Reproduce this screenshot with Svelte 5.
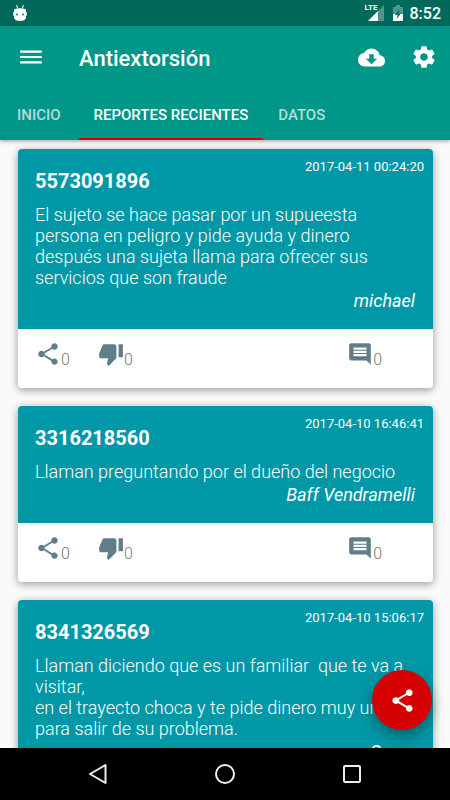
<script>
  const tabs = ['INICIO', 'REPORTES RECIENTES', 'DATOS'];
  let active = $state(1);

  const reports = [
    {
      phone: '5573091896',
      date: '2017-04-11 00:24:20',
      text: 'El sujeto se hace pasar por un supueesta\npersona en peligro y pide ayuda y dinero\ndespués una sujeta llama para ofrecer sus\nservicios que son fraude',
      author: 'michael'
    },
    {
      phone: '3316218560',
      date: '2017-04-10 16:46:41',
      text: 'Llaman preguntando por el dueño del negocio',
      author: 'Baff Vendramelli'
    },
    {
      phone: '8341326569',
      date: '2017-04-10 15:06:17',
      text: 'Llaman diciendo que es un familiar  que te va a\nvisitar,\nen el trayecto choca y te pide dinero muy urgente\npara salir de su problema.',
      author: 'Oscar'
    }
  ];

  const share =
    'M18 16.08c-.76 0-1.44.3-1.96.77L8.91 12.7c.05-.23.09-.46.09-.7s-.04-.47-.09-.7l7.05-4.11c.54.5 1.25.81 2.04.81 1.66 0 3-1.34 3-3s-1.34-3-3-3-3 1.34-3 3c0 .24.04.47.09.7L8.04 9.81C7.5 9.31 6.79 9 6 9c-1.66 0-3 1.34-3 3s1.34 3 3 3c.79 0 1.5-.31 2.04-.81l7.12 4.16c-.05.21-.08.43-.08.65 0 1.61 1.31 2.92 2.92 2.92s2.92-1.31 2.92-2.92-1.31-2.92-2.92-2.92z';
  const thumbDown =
    'M15 3H6c-.83 0-1.54.5-1.84 1.22l-3.02 7.05c-.09.23-.14.47-.14.73v1.91l.01.01L1 14c0 1.1.9 2 2 2h6.31l-.95 4.57-.03.32c0 .41.17.79.44 1.06L9.83 23l6.59-6.59c.36-.36.58-.86.58-1.41V5c0-1.1-.9-2-2-2zm4 0v12h4V3h-4z';
  const comment =
    'M21.99 4c0-1.1-.89-2-1.99-2H4c-1.1 0-2 .9-2 2v12c0 1.1.9 2 2 2h14l4 4-.01-18zM18 14H6v-2h12v2zm0-3H6V9h12v2zm0-3H6V6h12v2z';
  const cloud =
    'M19.35 10.04C18.67 6.59 15.64 4 12 4 9.11 4 6.6 5.64 5.35 8.04 2.34 8.36 0 10.91 0 14c0 3.31 2.69 6 6 6h13c2.76 0 5-2.24 5-5 0-2.64-2.05-4.78-4.65-4.96zM17 13l-5 5-5-5h3V9h4v4h3z';
  const gear =
    'M19.43 12.98c.04-.32.07-.64.07-.98s-.03-.66-.07-.98l2.11-1.65c.19-.15.24-.42.12-.64l-2-3.46c-.12-.22-.39-.3-.61-.22l-2.49 1c-.52-.4-1.08-.73-1.69-.98l-.38-2.65C14.46 2.18 14.25 2 14 2h-4c-.25 0-.46.18-.49.42l-.38 2.65c-.61.25-1.17.59-1.69.98l-2.49-1c-.23-.09-.49 0-.61.22l-2 3.46c-.13.22-.07.49.12.64l2.11 1.65c-.04.32-.07.65-.07.98s.03.66.07.98l-2.11 1.65c-.19.15-.24.42-.12.64l2 3.46c.12.22.39.3.61.22l2.49-1c.52.4 1.08.73 1.69.98l.38 2.65c.03.24.24.42.49.42h4c.25 0 .46-.18.49-.42l.38-2.65c.61-.25 1.17-.59 1.69-.98l2.49 1c.23.09.49 0 .61-.22l2-3.46c.12-.22.07-.49-.12-.64l-2.11-1.65zM12 15.5c-1.93 0-3.5-1.57-3.5-3.5s1.57-3.5 3.5-3.5 3.5 1.57 3.5 3.5-1.57 3.5-3.5 3.5z';
</script>

{#snippet icon(d, size)}
  <svg width={size} height={size} viewBox="0 0 24 24" fill="currentColor" aria-hidden="true"><path {d} /></svg>
{/snippet}

<div class="screen">
  <div class="status">
    <svg class="droid" width="14" height="18" viewBox="0 0 14 18" aria-hidden="true">
      <path d="M3.6 1l1 3.4M10.4 1l-1 3.4" stroke="#fff" stroke-width="1" />
      <path d="M1 5.2Q7 3.2 13 5.2V13Q13 17 7 17T1 13Z" fill="#fff" />
      <path d="M0.5 8v4M13.5 8v4" stroke="#fff" stroke-opacity=".7" />
      <circle cx="4" cy="10.5" r=".9" fill="#00695c" /><circle cx="10" cy="10.5" r=".9" fill="#00695c" />
    </svg>
    <span class="signal">
      <span class="lte">LTE</span>
      <svg width="16" height="16" viewBox="0 0 16 16" aria-hidden="true">
        <path d="M16 0V16H0Z" fill="#fff" fill-opacity=".3" /><path d="M10 6V16H0Z" fill="#fff" />
      </svg>
    </span>
    <svg class="battery" width="10" height="16" viewBox="0 0 10 16" aria-hidden="true">
      <path d="M3 0h4v2h3v14H0V2h3z" fill="#fff" fill-opacity=".3" />
      <path d="M0 9h10v7H0z" fill="#fff" />
      <path d="M6.5 4L2 10h2.6L3.6 14 8 8.5H5.6z" fill="#00695c" />
    </svg>
    <span class="clock">8:52</span>
  </div>

  <header>
    <div class="toolbar">
      <button class="menu" aria-label="Menú">
        <svg width="26" height="26" viewBox="0 0 24 24" fill="currentColor" aria-hidden="true"><path d="M2 18h20v-2H2v2zm0-5h20v-2H2v2zm0-7v2h20V6H2z" /></svg>
      </button>
      <h1>Antiextorsión</h1>
      <button aria-label="Descargar">{@render icon(cloud, 27)}</button>
      <button aria-label="Ajustes">{@render icon(gear, 26)}</button>
    </div>
    <nav class="tabs">
      {#each tabs as tab, i}
        <button class:active={active === i} onclick={() => (active = i)}>{tab}</button>
      {/each}
    </nav>
  </header>

  <main>
    {#each reports as r}
      <article>
        <div class="body">
          <time>{r.date}</time>
          <h2>{r.phone}</h2>
          <p>{r.text}</p>
          <address>{r.author}</address>
        </div>
        <div class="actions">
          <button aria-label="Compartir">{@render icon(share, 26)}<span>0</span></button>
          <button aria-label="No me gusta">{@render icon(thumbDown, 26)}<span>0</span></button>
          <button class="comments" aria-label="Comentarios">{@render icon(comment, 26)}<span>0</span></button>
        </div>
      </article>
    {/each}
    <button class="fab" aria-label="Compartir aplicación">{@render icon(share, 27)}</button>
  </main>

  <div class="navbar">
    <button aria-label="Atrás">
      <svg width="22" height="22" viewBox="0 0 22 22" aria-hidden="true"><path d="M18.5 2V20L3 11Z" /></svg>
    </button>
    <button aria-label="Inicio">
      <svg width="22" height="22" viewBox="0 0 22 22" aria-hidden="true"><circle cx="11" cy="11" r="9" /></svg>
    </button>
    <button aria-label="Recientes">
      <svg width="22" height="22" viewBox="0 0 22 22" aria-hidden="true"><rect x="3" y="3" width="16" height="16" rx="1" /></svg>
    </button>
  </div>
</div>

<style>
  :global(body) {
    margin: 0;
  }
  .screen {
    height: 100vh;
    display: flex;
    flex-direction: column;
    overflow: hidden;
    background: #fafafa;
    font-family: Roboto, 'Noto Sans', sans-serif;
    color: #fff;
  }
  button {
    padding: 0;
    border: 0;
    background: none;
    color: inherit;
    font: inherit;
    cursor: pointer;
  }
  svg {
    display: block;
    flex: none;
  }
  h1,
  h2,
  p {
    margin: 0;
  }

  .status {
    flex: none;
    height: 26px;
    box-sizing: border-box;
    padding: 0 9px 0 13px;
    display: flex;
    align-items: center;
    background: #00695c;
  }
  .droid {
    margin-right: auto;
  }
  .signal {
    position: relative;
  }
  .lte {
    position: absolute;
    left: -3px;
    top: -2px;
    font-family: 'Liberation Sans Narrow', Roboto, sans-serif;
    font-size: 8px;
    line-height: 9px;
    font-weight: 700;
  }
  .battery {
    margin: 0 7px 0 9px;
  }
  .clock {
    padding-top: 2px;
    font-size: 16px;
    font-weight: 500;
    line-height: 24px;
  }

  header {
    flex: none;
    position: relative;
    z-index: 1;
    background: #009688;
    box-shadow: 0 1px 4px rgba(0, 0, 0, 0.4);
  }
  .toolbar {
    height: 62px;
    padding: 0 13px 0 18px;
    display: flex;
    align-items: center;
    gap: 26px;
  }
  .menu {
    margin-right: 9px;
  }
  h1 {
    flex: 1;
    padding-top: 3px;
    font-size: 22px;
    font-weight: 500;
    line-height: 26px;
  }
  .tabs {
    display: flex;
  }
  .tabs button {
    height: 52px;
    box-sizing: border-box;
    padding: 3px 15px 0;
    border-bottom: 2px solid transparent;
    font-size: 15px;
    font-weight: 500;
    color: rgba(255, 255, 255, 0.7);
  }
  .tabs button:first-child {
    padding-left: 17px;
    padding-right: 18px;
  }
  .tabs .active {
    color: #fff;
    border-color: #d50000;
  }

  main {
    flex: 1;
    min-height: 0;
    position: relative;
    overflow: hidden;
    padding: 9px 17px 0 18px;
    display: flex;
    flex-direction: column;
    gap: 18px;
  }
  article {
    flex: none;
    border-radius: 4px;
    background: #fff;
    box-shadow: 0 2px 8px rgba(0, 0, 0, 0.4);
  }
  .body {
    position: relative;
    padding: 20px 18px 18px 17px;
    border-radius: 4px 4px 0 0;
    background: #0097a7;
  }
  time {
    position: absolute;
    top: 10px;
    right: 9px;
    font-size: 13px;
    line-height: 16px;
  }
  h2 {
    font-size: 20px;
    font-weight: 700;
    line-height: 24px;
  }
  p {
    margin-top: 11px;
    font-size: 18px;
    font-weight: 300;
    line-height: 21px;
    white-space: pre;
  }
  address {
    margin-top: 2px;
    font-size: 18px;
    line-height: 21px;
    text-align: right;
  }
  .actions {
    height: 59px;
    box-sizing: border-box;
    padding: 12px 51px 0 17px;
    display: flex;
    align-items: flex-start;
    gap: 28px;
    color: #607d8b;
  }
  .actions button {
    display: flex;
    align-items: flex-end;
  }
  .actions span {
    font-size: 16px;
    font-weight: 300;
    line-height: 14px;
    color: #757575;
  }
  .comments {
    margin-left: auto;
  }
  .fab {
    position: absolute;
    right: 18px;
    bottom: 18px;
    width: 60px;
    height: 60px;
    display: grid;
    place-items: center;
    border-radius: 50%;
    background: #d50000;
    box-shadow: 0 6px 14px rgba(0, 0, 0, 0.35);
  }

  .navbar {
    flex: none;
    height: 52px;
    padding: 0 35px;
    display: flex;
    background: #000;
  }
  .navbar button {
    flex: 1;
    display: grid;
    place-items: center;
  }
  .navbar svg {
    fill: none;
    stroke: #eee;
    stroke-width: 2;
    stroke-linejoin: round;
  }
</style>
